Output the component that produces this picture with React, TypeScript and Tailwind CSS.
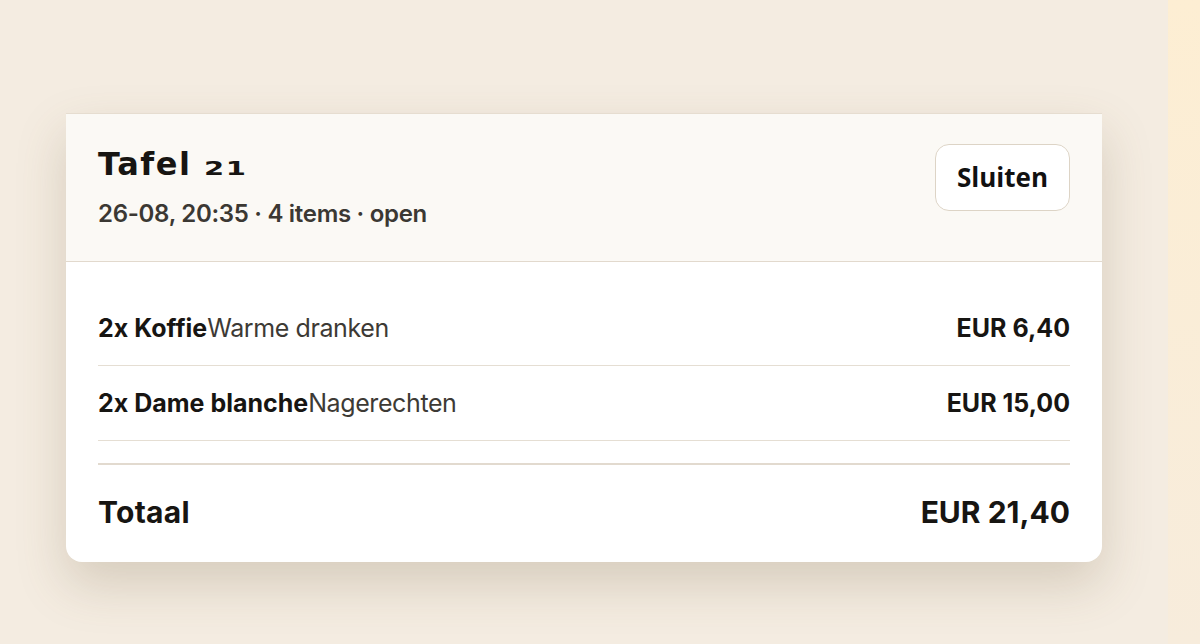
const items = [
  { qty: 2, name: 'Koffie', category: 'Warme dranken', price: 'EUR 6,40' },
  { qty: 2, name: 'Dame blanche', category: 'Nagerechten', price: 'EUR 15,00' },
]

export default function App() {
  return (
    <div className="flex h-[644px] w-[1200px] overflow-hidden bg-[#f4ece1]" style={{ fontFamily: 'Inter, sans-serif' }}>
      {/* Main area with the order card */}
      <main className="flex flex-1 justify-center pt-[113px]">
        <section className="flex h-[449px] w-[1036px] flex-col overflow-hidden rounded-b-2xl border-t border-[#e6ddd0] bg-white shadow-[0_22px_50px_rgba(110,90,60,0.22)]">
          {/* Header */}
          <header className="flex items-start justify-between border-b border-[#e2d9cd] bg-[#fbf9f5] px-8 pt-[31px] pb-[32px]">
            <div className="flex flex-col">
              <h1
                className="whitespace-nowrap text-[32px] font-bold leading-[38px] tracking-[1.5px] text-[#171512]"
                style={{ fontFamily: '"DejaVu Sans", sans-serif' }}
              >
                Tafel{' '}
                <span className="inline-block origin-left scale-x-[1.45] text-[20px] tracking-[1px]">21</span>
              </h1>
              <p className="mt-[12px] text-[24px] font-semibold leading-[30px] tracking-[-0.3px] text-[#3b3833]">
                26-08, 20:35 · 4 items · open
              </p>
            </div>
            <button
              className="-mt-[1px] flex h-[67px] w-[135px] items-center justify-center rounded-[14px] border-[1.5px] border-[#ddd4c6] bg-white text-[26px] font-bold text-[#111]"
              style={{ fontFamily: '"Open Sans", sans-serif' }}
            >
              Sluiten
            </button>
          </header>

          {/* Line items */}
          <div className="flex flex-1 flex-col px-8 pt-[29px]">
            {items.map((it) => (
              <div
                key={it.name}
                className="flex items-center justify-between border-b border-[#e5ded3] py-[22px] leading-[30px]"
              >
                <div className="flex items-baseline text-[25px]">
                  <span className="font-bold text-[#171512]">
                    {it.qty}x {it.name}
                  </span>
                  <span className="tracking-[-0.4px] text-[#3d3a35]">{it.category}</span>
                </div>
                <span className="text-[25px] font-bold text-[#171512]">{it.price}</span>
              </div>
            ))}

            {/* Total */}
            <div className="mt-[22px] flex flex-1 items-center justify-between border-t-2 border-[#e2dacf] pb-[2px]">
              <span className="text-[30px] font-bold tracking-[0.3px] text-[#171512]">Totaal</span>
              <span className="text-[30px] font-bold text-[#171512]">EUR 21,40</span>
            </div>
          </div>
        </section>
      </main>

      {/* Right strip */}
      <aside className="w-[32px] bg-gradient-to-b from-[#fdeed3] to-[#f7ecdc]" />
    </div>
  )
}
